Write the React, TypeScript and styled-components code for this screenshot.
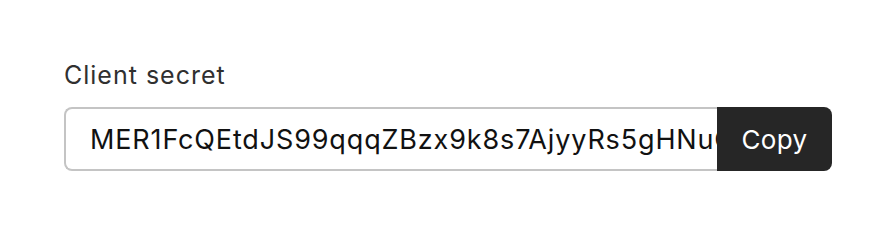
import React from 'react'
import styled, { createGlobalStyle } from 'styled-components'

const GlobalStyle = createGlobalStyle`
	html, body {
		margin: 0;
		padding: 0;
		background: #ffffff;
		font-family: Inter, 'Noto Sans', sans-serif;
	}
`

const Wrapper = styled.div`
	width: 896px;
	height: 235px;
	box-sizing: border-box;
	padding: 57px 64px 0;
	display: flex;
	flex-direction: column;
	gap: 14px;
`

const Label = styled.label`
	font-size: 25px;
	line-height: 36px;
	letter-spacing: 1px;
	color: #303030;
`

const Row = styled.div`
	display: flex;
	width: 768px;
	height: 64px;
`

const SecretInput = styled.input`
	flex: 1;
	min-width: 0;
	box-sizing: border-box;
	height: 100%;
	margin: 0;
	padding: 0 0 0 24px;
	border: 2px solid #c4c4c4;
	border-right: none;
	border-radius: 8px 0 0 8px;
	font-family: Inter, 'Noto Sans', sans-serif;
	font-size: 27px;
	letter-spacing: 0.85px;
	color: #111111;
	background: #ffffff;
	outline: none;
`

const CopyButton = styled.button`
	width: 115px;
	height: 100%;
	margin: 0;
	border: none;
	border-radius: 0 8px 8px 0;
	background: #262626;
	color: #ffffff;
	font-family: Inter, 'Noto Sans', sans-serif;
	font-size: 26px;
	letter-spacing: 0.4px;
	cursor: pointer;
`

export default function App() {
	const secret = 'MER1FcQEtdJS99qqqZBzx9k8s7AjyyRs5gHNuGmT4wVx'
	return (
		<>
			<GlobalStyle />
			<Wrapper>
				<Label htmlFor="secret">{'Client secret'}</Label>
				<Row>
					<SecretInput id="secret" readOnly value={secret} />
					<CopyButton>{'Copy'}</CopyButton>
				</Row>
			</Wrapper>
		</>
	)
}
